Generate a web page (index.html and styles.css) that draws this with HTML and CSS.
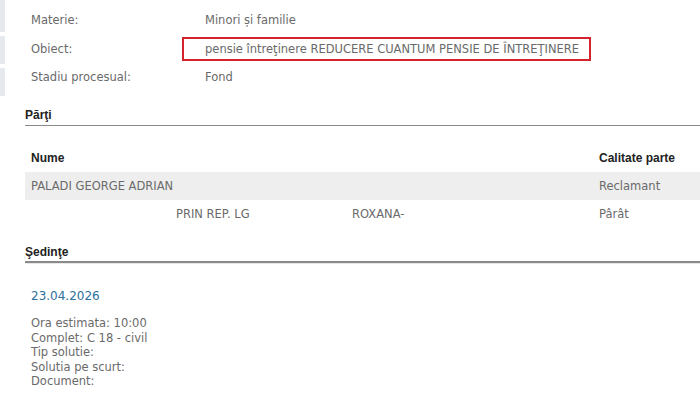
FILE: index.html
```html
<!DOCTYPE html>
<html lang="ro">
<head>
    <meta charset="UTF-8">
    <meta name="viewport" content="width=device-width, initial-scale=1.0">
    <title>Dosar</title>
<link rel="stylesheet" href="styles.css">
</head>
<body>
    <div class="top">
        <div class="strip">
            <div class="strip-block first"></div>
            <div class="strip-block"></div>
            <div class="strip-block"></div>
        </div>
        <div class="info">
            <div class="info-row">
                <div class="label">Materie:</div>
                <div class="value">Minori și familie</div>
            </div>
            <div class="info-row">
                <div class="label">Obiect:</div>
                <div class="value"><span class="mark">pensie întreţinere REDUCERE CUANTUM PENSIE DE ÎNTREŢINERE</span></div>
            </div>
            <div class="info-row">
                <div class="label">Stadiu procesual:</div>
                <div class="value">Fond</div>
            </div>
        </div>
    </div>

    <div class="section">
        <div class="section-title">Părţi</div>
        <table class="parti">
            <tr>
                <th class="col-name">Nume</th>
                <th>Calitate parte</th>
            </tr>
            <tr class="odd">
                <td>PALADI GEORGE ADRIAN</td>
                <td>Reclamant</td>
            </tr>
            <tr>
                <td><span class="rep">PRIN REP. LG</span>ROXANA-</td>
                <td>Pârât</td>
            </tr>
        </table>
    </div>

    <div class="section">
        <div class="section-title thick">Şedinţe</div>
        <div class="sedinta">
            <div class="date">23.04.2026</div>
            <div class="details">
                Ora estimata: 10:00<br>
                Complet: C 18 - civil<br>
                Tip solutie:<br>
                Solutia pe scurt:<br>
                Document:
            </div>
        </div>
    </div>
</body>
</html>
```

FILE: styles.css
```css
body {
margin: 0;
font-family: "DejaVu Sans", Verdana, sans-serif;
font-size: 11.5px;
color: #6a6a6a;
background: #fff;
}

.top {
display: flex;
}

.strip {
display: flex;
flex-direction: column;
gap: 4px;
width: 5px;
}
.strip-block {
height: 28px;
background-color: #e6eaef;
}
.strip-block.first {height: 32px;}

.info {
margin-left: 26px;
padding-top: 6px;
}
.info-row {
display: flex;
align-items: center;
height: 28.5px;
}
.label {width: 174px;}

.mark {
display: inline-block;
margin-left: -23px;
padding: 3px 10px 3px 21px;
border: 2px solid #d3232e;
}

.section {
margin-left: 25px;
}
.section-title {
margin-top: 12px;
padding-bottom: 3px;
font-family: "Liberation Sans", Arial, sans-serif;
font-size: 12px;
font-weight: bold;
line-height: 14px;
color: #222;
border-bottom: 1px solid #8a8a8a;
}
.section-title.thick {
margin-top: 17px;
padding-bottom: 2px;
border-bottom: 2px solid #8a8a8a;
box-shadow: 0 1px 0 #e8e8e8;
}

.parti {
width: 100%;
margin-top: 18px;
border-collapse: collapse;
}
.parti th {
height: 28px;
padding: 0 6px;
text-align: left;
font-family: "Liberation Sans", Arial, sans-serif;
font-size: 12px;
color: #222;
}
.parti .col-name {width: 556px;}
.parti td {
height: 28px;
padding: 0 6px;
}
.parti tr.odd td {background-color: #eeeeee;}

.rep {
display: inline-block;
margin-left: 145px;
width: 176px;
}

.sedinta {
padding: 26px 6px 0;
}
.date {
font-size: 12px;
color: #2c6f9c;
}
.details {
margin-top: 13px;
line-height: 14.5px;
}
```
